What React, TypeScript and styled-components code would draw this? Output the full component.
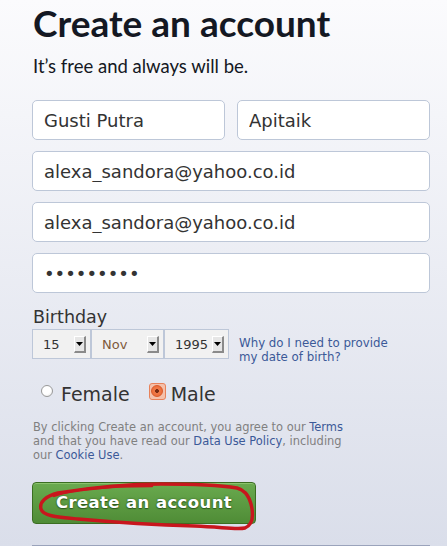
import React from 'react';
import styled, { createGlobalStyle } from 'styled-components';

const GlobalStyle = createGlobalStyle`
  html, body {
    margin: 0;
    padding: 0;
  }
  body {
    width: 447px;
    height: 546px;
    overflow: hidden;
    background: linear-gradient(#fbfbfd, #dadeea);
    font-family: 'DejaVu Sans', Verdana, sans-serif;
  }
`;

type SelectProps = {
  value: string,
  width: number,
  highlight?: boolean
};

const Select = ({ value, width, highlight }: SelectProps) => (
  <SelectBox style={{ width }}>
    <SelectValue highlight={highlight}>{value}</SelectValue>
    <ArrowButton>
      <svg width="7" height="4" viewBox="0 0 7 4">
        <path d="M0 0 L7 0 L3.5 4 Z" fill="#000" />
      </svg>
    </ArrowButton>
  </SelectBox>
);

export default function App() {
  return (
    <Page>
      <GlobalStyle />
      <Title>Create an account</Title>
      <Subtitle>It’s free and always will be.</Subtitle>

      <Fields>
        <NameRow>
          <Input defaultValue='Gusti Putra' />
          <Input defaultValue='Apitaik' />
        </NameRow>
        <Input defaultValue='alexa_sandora@yahoo.co.id' />
        <Input defaultValue='alexa_sandora@yahoo.co.id' />
        <Input type='password' defaultValue='123456789' />
      </Fields>

      <Label>Birthday</Label>
      <BirthRow>
        <Selects>
          <Select value='15' width={59} />
          <Select value='Nov' width={73} highlight />
          <Select value='1995' width={65} />
        </Selects>
        <HelpLink>Why do I need to provide my date of birth?</HelpLink>
      </BirthRow>

      <GenderRow>
        <Option>
          <Radio />
          <OptionLabel>Female</OptionLabel>
        </Option>
        <Option>
          <RadioFocus>
            <RadioChecked />
          </RadioFocus>
          <OptionLabel>Male</OptionLabel>
        </Option>
      </GenderRow>

      <Terms>
        By clicking Create an account, you agree to our <a>Terms</a> and that you
        have read our <a>Data Use Policy</a>, including our <a>Cookie Use</a>.
      </Terms>

      <Button>
        Create an account
        <Scribble width="224" height="50" viewBox="0 0 224 50">
          <path
            d="M26 11 C14 14 7 20 9 27 C11 34 24 35 46 37 C80 40 130 43 163 44 C190 45 205 48 213 46 C222 42 221 30 219 22 C216 12 212 8 205 6 C180 2 150 2 129 2 C100 2 70 4 26 11 Z"
            fill="none"
            stroke="#c8161d"
            strokeWidth="3.4"
            strokeLinejoin="round"
          />
          <path
            d="M22 14 C40 7 80 4 120 4"
            fill="none"
            stroke="#c8161d"
            strokeWidth="2.4"
            strokeLinecap="round"
          />
        </Scribble>
      </Button>

      <Divider />
    </Page>
  );
}

const Page = styled.div`
  width: 398px;
  padding: 0 0 0 32px;
  display: flex;
  flex-direction: column;
`;

const Title = styled.div`
  font-family: Lato, 'Open Sans', sans-serif;
  font-weight: 700;
  font-size: 37px;
  line-height: 44px;
  color: #141823;
  margin: 1px 0 0 1px;
`;

const Subtitle = styled.div`
  font-family: Lato, 'Open Sans', sans-serif;
  font-size: 18.5px;
  line-height: 24px;
  color: #141823;
  margin: 9px 0 0 1px;
`;

const Fields = styled.div`
  display: flex;
  flex-direction: column;
  gap: 11px;
  margin-top: 22px;
`;

const NameRow = styled.div`
  display: grid;
  grid-template-columns: 1fr 1fr;
  gap: 12px;
`;

const Input = styled.input`
  box-sizing: border-box;
  width: 100%;
  height: 40px;
  padding: 0 11px;
  border: 1px solid #bdc7d8;
  border-radius: 5px;
  background: #fff;
  font-family: 'DejaVu Sans', Verdana, sans-serif;
  font-size: 18px;
  color: #333;
  outline: none;
`;

const Label = styled.div`
  font-size: 17.5px;
  line-height: 22px;
  color: #333;
  margin: 13px 0 0 1px;
`;

const BirthRow = styled.div`
  display: flex;
  align-items: flex-start;
  gap: 10px;
  margin-top: 1px;
`;

const Selects = styled.div`
  display: flex;
`;

const SelectBox = styled.div`
  box-sizing: border-box;
  height: 30px;
  display: flex;
  align-items: center;
  justify-content: space-between;
  padding: 0 4px 0 10px;
  border: 1px solid #bdc7d8;
  background: #f1f1f1;
`;

const SelectValue = styled.span<{ highlight?: boolean }>`
  font-size: 13px;
  color: ${p => p.highlight ? '#7e5a3c' : '#333'};
`;

const ArrowButton = styled.div`
  box-sizing: border-box;
  width: 12px;
  height: 17px;
  display: flex;
  align-items: center;
  justify-content: center;
  background: #e6e6e6;
  border-right: 2px solid #8a8a8a;
  border-bottom: 2px solid #8a8a8a;
  border-top: 1px solid #fff;
  border-left: 1px solid #fff;
`;

const HelpLink = styled.a`
  width: 150px;
  font-size: 11.8px;
  line-height: 14px;
  color: #3b5998;
  margin-top: 7px;
`;

const GenderRow = styled.div`
  display: flex;
  align-items: center;
  gap: 19px;
  margin: 18px 0 0 9px;
`;

const Option = styled.label`
  display: flex;
  align-items: center;
  gap: 5px;
`;

const Radio = styled.span`
  box-sizing: border-box;
  width: 12px;
  height: 12px;
  border-radius: 50%;
  border: 1px solid #999;
  background: radial-gradient(circle at 40% 35%, #fff 50%, #e4e4e4);
  margin: -7px 3px 0 0;
`;

const RadioFocus = styled.span`
  box-sizing: border-box;
  width: 17px;
  height: 17px;
  border: 1px solid #e8825a;
  border-radius: 3px;
  background: #f4c1ab;
  display: flex;
  align-items: center;
  justify-content: center;
  margin-top: -6px;
`;

const RadioChecked = styled.span`
  box-sizing: border-box;
  width: 12px;
  height: 12px;
  border-radius: 50%;
  background: radial-gradient(circle, #7a2b12 0 1.6px, #f07a48 2.2px, #e8642f);
  border: 1px solid #d9592a;
`;

const OptionLabel = styled.span`
  font-size: 19px;
  line-height: 24px;
  color: #333;
`;

const Terms = styled.div`
  width: 314px;
  font-size: 11.45px;
  line-height: 14px;
  color: #808080;
  margin: 14px 0 0 1px;

  a {
    color: #3b5998;
  }
`;

const Button = styled.button`
  position: relative;
  box-sizing: border-box;
  width: 224px;
  height: 42px;
  margin-top: 20px;
  border: 1px solid #3b6e22;
  border-radius: 4px;
  background: linear-gradient(#6aaa4f, #4f8c36);
  box-shadow: inset 0 1px 0 #8cc36e;
  font-family: 'DejaVu Sans', Verdana, sans-serif;
  font-weight: 700;
  font-size: 16.5px;
  letter-spacing: 0.4px;
  color: #fff;
  text-shadow: 0 0 2px #2f5a1e, 0 1px 1px #2f5a1e;
  padding: 0 0 2px 0;
  text-align: center;
`;

const Scribble = styled.svg`
  position: absolute;
  left: -1px;
  top: -1px;
  pointer-events: none;
  overflow: visible;
`;

const Divider = styled.div`
  height: 1px;
  background: #9aa3bb;
  margin-top: 21px;
`;
